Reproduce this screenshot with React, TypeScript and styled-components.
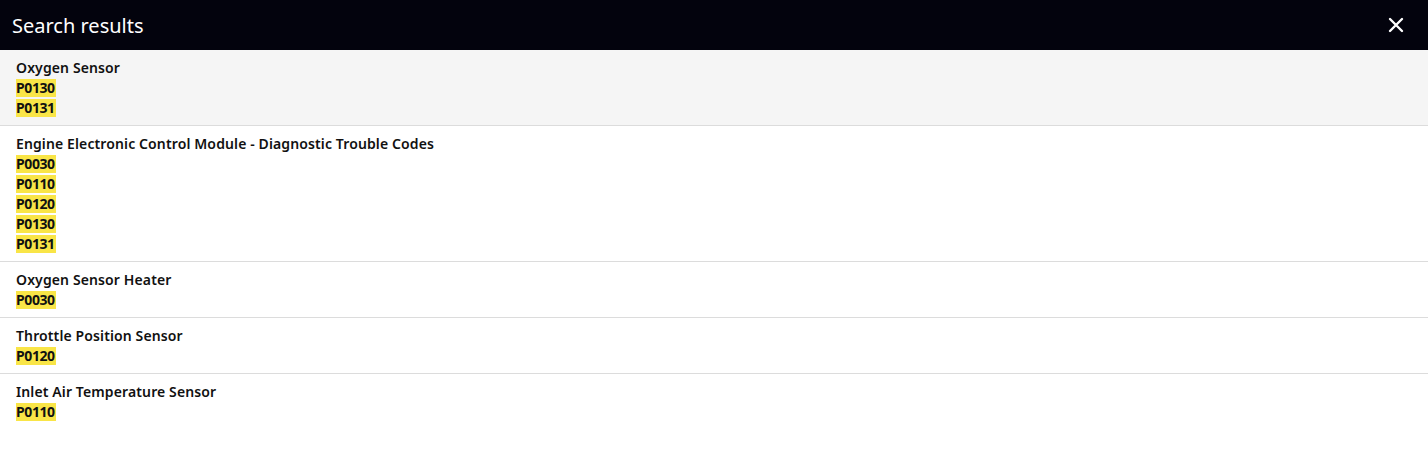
import React from 'react'
import styled, { createGlobalStyle } from 'styled-components'

interface ResultItem {
  title: string
  codes: string[]
}

const results: ResultItem[] = [
  { title: 'Oxygen Sensor', codes: ['P0130', 'P0131'] },
  {
    title: 'Engine Electronic Control Module - Diagnostic Trouble Codes',
    codes: ['P0030', 'P0110', 'P0120', 'P0130', 'P0131']
  },
  { title: 'Oxygen Sensor Heater', codes: ['P0030'] },
  { title: 'Throttle Position Sensor', codes: ['P0120'] },
  { title: 'Inlet Air Temperature Sensor', codes: ['P0110'] }
]

const App: React.FC = () => {
  return (
    <>
      <GlobalStyle />
      <Panel>
        <Header>
          <Title>Search results</Title>
          <CloseButton aria-label='Close'>
            <svg width='16' height='16' viewBox='0 0 16 16' fill='none' xmlns='http://www.w3.org/2000/svg'>
              <path d='M2 2L14 14M14 2L2 14' stroke='currentColor' strokeWidth='2.4' strokeLinecap='round' />
            </svg>
          </CloseButton>
        </Header>

        <List>
          {results.map((item, i) => (
            <Row key={item.title} $active={i === 0} $last={i === results.length - 1}>
              <RowTitle>{item.title}</RowTitle>
              {item.codes.map(code => (
                <CodeLine key={code}>
                  <Code>{code}</Code>
                </CodeLine>
              ))}
            </Row>
          ))}
        </List>
      </Panel>
    </>
  )
}

const GlobalStyle = createGlobalStyle`
  body {
    margin: 0;
    background: #ffffff;
    font-family: 'Noto Sans', 'DejaVu Sans', sans-serif;
  }
`

const Panel = styled.div`
  width: 100%;
  min-height: 455px;
  background: #ffffff;
`

const Header = styled.div`
  height: 50px;
  background: #03030d;
  display: flex;
  align-items: center;
  justify-content: space-between;
  padding: 0 24px 0 12px;
  box-sizing: border-box;
`

const Title = styled.h1`
  margin: 0;
  font-size: 20px;
  font-weight: 400;
  color: #ffffff;
`

const CloseButton = styled.button`
  background: none;
  border: none;
  padding: 0;
  color: #ffffff;
  display: flex;
  align-items: center;
  cursor: pointer;
`

const List = styled.div`
  display: flex;
  flex-direction: column;
`

const Row = styled.div<{ $active?: boolean; $last?: boolean }>`
  padding: 8px 16px 7px;
  background: ${p => (p.$active ? '#f5f5f5' : '#ffffff')};
  border-bottom: ${p => (p.$last ? 'none' : '1px solid #dcdcdc')};
  display: flex;
  flex-direction: column;
`

const RowTitle = styled.div`
  font-size: 14px;
  line-height: 20px;
  font-weight: 600;
  color: #111111;
  letter-spacing: 0.12px;
`

const CodeLine = styled.div`
  height: 20px;
  display: flex;
  align-items: center;
`

const Code = styled.span`
  background: #f9e547;
  color: #111111;
  font-size: 14px;
  font-weight: 700;
  line-height: 18px;
  letter-spacing: -0.4px;
  padding: 0 1px 0 0;
`

export default App
